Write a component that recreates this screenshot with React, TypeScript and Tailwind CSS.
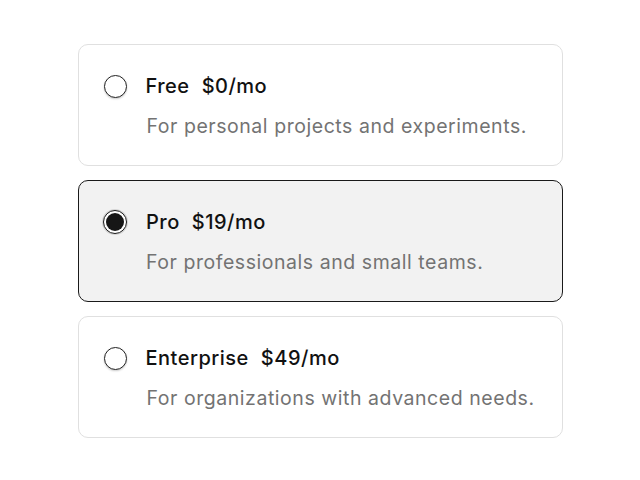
import React from "react";

const plans = [
  { name: "Free", price: "$0/mo", desc: "For personal projects and experiments.", selected: false },
  { name: "Pro", price: "$19/mo", desc: "For professionals and small teams.", selected: true },
  { name: "Enterprise", price: "$49/mo", desc: "For organizations with advanced needs.", selected: false },
];

function Radio({ checked }: { checked: boolean }) {
  return checked ? (
    <span className="flex h-[24px] w-[24px] shrink-0 items-center justify-center rounded-full border-[1.5px] border-[#1a1a1a] bg-white shadow-[0_0_0_1px_rgba(0,0,0,0.12)]">
      <span className="h-[18px] w-[18px] rounded-full bg-[#161616]" />
    </span>
  ) : (
    <span className="h-[23px] w-[23px] shrink-0 rounded-full border-[1.5px] border-[#222] bg-white shadow-[0_1px_2px_rgba(0,0,0,0.2)]" />
  );
}

export default function App() {
  return (
    <div
      className="flex min-h-[480px] w-[640px] flex-col items-center bg-white pt-[44px]"
      style={{ fontFamily: "Inter, 'Noto Sans', sans-serif" }}
    >
      <div className="flex w-[485px] flex-col gap-[14px]">
        {plans.map((p) => (
          <div
            key={p.name}
            className={
              p.selected
                ? "flex h-[122px] flex-col justify-center gap-[16px] rounded-[10px] border-[1.5px] border-[#1a1a1a] bg-[#f2f2f2] pl-[24.5px] pt-[2px]"
                : "flex h-[122px] flex-col justify-center gap-[16px] rounded-[10px] border border-[#e0e0e0] bg-white pl-[25px] pt-[2px]"
            }
          >
            <div className="flex items-center gap-[19px]">
              <Radio checked={p.selected} />
              <div className="flex gap-[12px] text-[20px] font-medium leading-6 tracking-[0.025em] text-[#111]">
                <span>{p.name}</span>
                <span>{p.price}</span>
              </div>
            </div>
            <div className="pl-[43px] text-[19.5px] leading-6 tracking-[0.028em] text-[#737373]">{p.desc}</div>
          </div>
        ))}
      </div>
    </div>
  );
}
